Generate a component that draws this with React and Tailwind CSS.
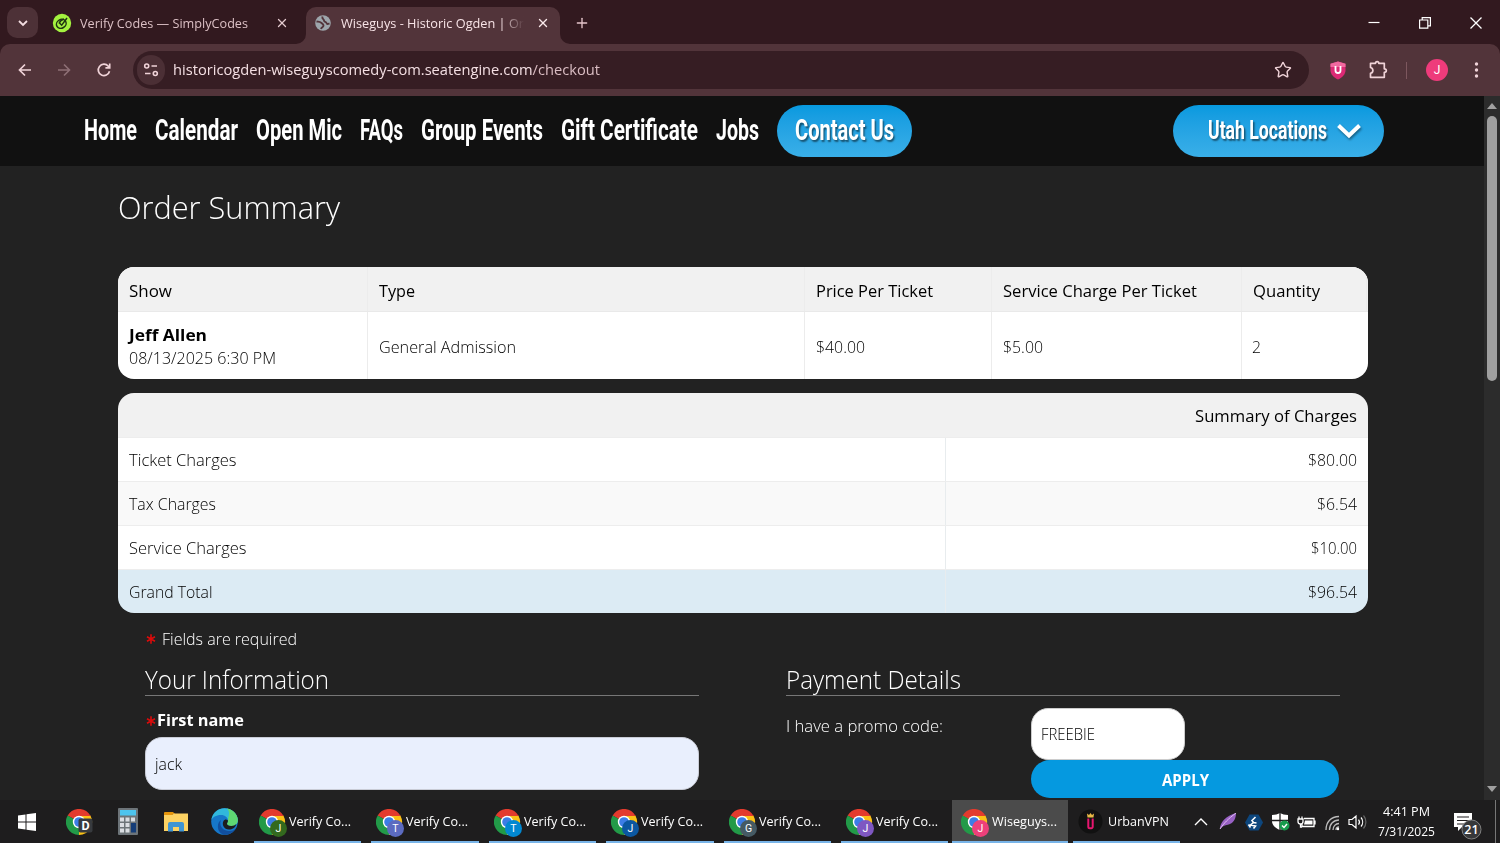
import React, { useLayoutEffect, useRef, useState } from "react";
import { Star, X, Plus } from "lucide-react";

// One line of text, squeezed or stretched to the given width
const Fit = ({ w, className = "", children }) => {
  const ref = useRef(null);
  const [scale, setScale] = useState(1);

  useLayoutEffect(() => {
    if (ref.current.offsetWidth > 0) {
      setScale(w / ref.current.getBoundingClientRect().width);
    }
  }, []);

  return (
    <span className={`block shrink-0 whitespace-nowrap ${className}`} style={{ width: w }}>
      <span ref={ref} className="inline-block origin-left" style={{ transform: `scaleX(${scale})` }}>
        {children}
      </span>
    </span>
  );
};

const TabStrip = () => (
  <div className="flex h-[44px] items-end bg-[#32191f]">
    <div className="mb-[6px] ml-[7px] flex h-[31px] w-[31px] items-center justify-center rounded-[10px] bg-[#4d3137]">
      <svg width="12" height="12" viewBox="0 0 12 12" fill="none" stroke="#f3dde1" strokeWidth="1.8">
        <path d="M2 4l4 4 4-4" />
      </svg>
    </div>
    <div className="flex h-[37px] w-[256px] items-center pb-[6px] pl-[14px]">
      <svg width="20" height="20" viewBox="0 0 20 20">
        <circle cx="10" cy="10" r="9.2" fill="#a4f23f" />
        <ellipse cx="9.300" cy="10.800" rx="5" ry="4.300" fill="none" stroke="#203512" strokeWidth="1.500" transform="rotate(-30 9.300 10.800)" />
        <path d="M7.500 10l2.200 2.200 5.300-7.200M7 10.500c1-2.500 3-4 5-4.500" fill="none" stroke="#203512" strokeWidth="1.500" />
      </svg>
      <Fit w={168} className="ml-[7.500px] pt-px text-[13.5px] text-[#dcc0c5]">Verify Codes — SimplyCodes</Fit>
      <X className="ml-[27px] shrink-0 text-[#e6cbd0]" size={14} strokeWidth={2.2} />
    </div>
    <div className="relative ml-[12px] flex h-[37px] w-[254px] items-center rounded-t-[10px] bg-[#52343a] pb-[6px] pl-[9px]">
      <svg className="absolute bottom-0 -left-[10px]" width="10" height="10" viewBox="0 0 10 10">
        <path d="M10 0v10H0A10 10 0 0 0 10 0z" fill="#52343a" />
      </svg>
      <svg className="absolute -right-[10px] bottom-0" width="10" height="10" viewBox="0 0 10 10">
        <path d="M0 0v10h10A10 10 0 0 1 0 0z" fill="#52343a" />
      </svg>
      <svg width="16" height="16" viewBox="0 0 16 16" className="shrink-0">
        <circle cx="8" cy="8" r="7.8" fill="#9da5ab" />
        <path d="M1.500 6.500c2 .3 3.500 0 4.500 1.200s2.500 1 2.500 2.800-2 1.500-2.500 3.500M7.500 1.500C6.500 4 9 4 9 5.500s2 1 2.500 2.500 1.500 1 3 .5" fill="none" stroke="#52343a" strokeWidth="1.900" />
      </svg>
      <div className="relative ml-[10px]">
        <Fit w={183} className="pt-px text-[13.5px] text-[#f8e4e7]">Wiseguys - Historic Ogden | Or</Fit>
        <div className="absolute top-0 right-0 h-full w-[24px] bg-linear-to-r from-transparent to-[#52343a]" />
      </div>
      <X className="ml-[12px] shrink-0 text-[#fbe9eb]" size={14} strokeWidth={2.4} />
    </div>
    <Plus className="mb-[13px] ml-[14px] text-[#e6c5cb]" size={16} strokeWidth={2} />
    <div className="mb-[15px] ml-auto flex items-center gap-[39px] pr-[18px] text-white">
      <svg width="12" height="12" viewBox="0 0 12 12" stroke="currentColor" fill="none">
        <path d="M0.5 5.5h11" strokeWidth="1.2" />
      </svg>
      <svg width="12" height="12" viewBox="0 0 12 12" stroke="currentColor" fill="none" strokeWidth="1.2">
        <path d="M0.6 3h8.2v8.2H0.6zM3.2 3V0.6h8.2v8.2H9" />
      </svg>
      <svg width="12" height="12" viewBox="0 0 12 12" stroke="currentColor" fill="none" strokeWidth="1.3">
        <path d="M0.5 0.5l11 11M11.5 0.5l-11 11" />
      </svg>
    </div>
  </div>
);

const Toolbar = () => (
  <div className="bg-[#32191f]">
    <div className="flex h-[52px] items-center rounded-t-[10px] bg-[#52343a] text-[#f0d3d8]">
      <svg className="ml-[17px]" width="16" height="16" viewBox="0 0 16 16" fill="none" stroke="currentColor" strokeWidth="1.7">
        <path d="M14 8H2.5M8 2.5L2.5 8 8 13.5" />
      </svg>
      <svg className="ml-[23px] text-[#8f6f76]" width="16" height="16" viewBox="0 0 16 16" fill="none" stroke="currentColor" strokeWidth="1.6">
        <path d="M2 8h11.500M8 2.500L13.500 8 8 13.500" />
      </svg>
      <svg className="ml-[24px]" width="16" height="16" viewBox="0 0 16 16" fill="none" stroke="currentColor" strokeWidth="1.7">
        <path d="M13.500 9.300A5.700 5.700 0 1 1 12.300 4.200L13.500 5.500M13.700 1.500v4.300H9.400" />
      </svg>
      <div className="ml-[21px] flex h-[38px] w-[1176px] items-center rounded-full bg-[#361d23]">
        <div className="ml-[4px] flex h-[30px] w-[28px] items-center justify-center rounded-full bg-[#4b2f35]">
          <svg width="16" height="16" viewBox="0 0 16 16" fill="none" stroke="currentColor" strokeWidth="1.6">
            <circle cx="3.700" cy="4" r="2" />
            <path d="M8.500 4H14M2 11.500h5.500" />
            <circle cx="12.300" cy="11.500" r="2" />
          </svg>
        </div>
        <Fit w={427} className="ml-[8px] pb-px text-[15px] text-[#f4dfe3]">
          historicogden-wiseguyscomedy-com.seatengine.com<span className="text-[#d9bcc2]">/checkout</span>
        </Fit>
        <Star className="mr-[17px] ml-auto" size={18} strokeWidth={1.9} strokeLinejoin="miter" />
      </div>
      <svg className="ml-[20px]" width="18" height="19" viewBox="0 0 18 19">
        <path d="M9 .5l7.500 2.300v6.500c0 4-3 7.200-7.500 9.200-4.500-2-7.500-5.200-7.500-9.200V2.800z" fill="#dc2a75" />
        <path d="M9 .5l7.500 2.300V6h-15V2.800z" fill="#f06aa0" />
        <path d="M6.500 5v4.500a2.500 2.500 0 0 0 5 0V5" fill="none" stroke="#fff" strokeWidth="1.800" />
      </svg>
      <svg className="ml-[21px]" width="20" height="20" viewBox="0 0 20 20" fill="none" stroke="currentColor" strokeWidth="1.7" strokeLinejoin="round">
        <path d="M2.500 3.300h5C7.500 1 10.800 1 10.800 3.300h5.500v5.500c2.700 0 2.700 3.500 0 3.500v5H2.500v-4c3.200-.8 3.200-5 0-5.800z" />
      </svg>
      <div className="ml-[18px] h-[17px] w-px bg-[#7d575e]" />
      <div className="ml-[19px] flex h-[22px] w-[22px] items-center justify-center rounded-full bg-[#ee3b7b] font-['Roboto',sans-serif] text-[12px] text-white">J</div>
      <svg className="ml-[26px]" width="5" height="18" viewBox="0 0 5 18" fill="currentColor">
        <circle cx="2.500" cy="3" r="1.700" />
        <circle cx="2.500" cy="9" r="1.700" />
        <circle cx="2.500" cy="15" r="1.700" />
      </svg>
    </div>
  </div>
);

const links = [
  { label: "Home", w: 53 },
  { label: "Calendar", w: 83 },
  { label: "Open Mic", w: 86 },
  { label: "FAQs", w: 43 },
  { label: "Group Events", w: 122 },
  { label: "Gift Certificate", w: 137 },
  { label: "Jobs", w: 43 },
];

const SiteNav = () => (
  <nav className="flex h-[70px] items-center bg-[#111] pl-[84px] font-['Roboto',sans-serif] text-[29px] leading-[52px] font-bold text-white">
    <div className="flex gap-[18px] pb-[2px]">
      {links.map((link) => (
        <Fit key={link.label} w={link.w}>{link.label}</Fit>
      ))}
    </div>
    <div className="ml-[18px] h-[52px] w-[135px] rounded-full bg-linear-to-b from-[#0699df] to-[#39afe8] pl-[18px] leading-[50px]">
      <Fit w={99} className="[text-shadow:2px_2px_2px_rgba(0,0,0,0.5)]">Contact Us</Fit>
    </div>
    <div className="ml-[261px] flex h-[52px] w-[211px] items-center rounded-full bg-linear-to-b from-[#0699df] to-[#39afe8] pl-[35px]">
      <Fit w={119} className="text-[25px] [text-shadow:2px_2px_2px_rgba(0,0,0,0.5)]">Utah Locations</Fit>
      <svg className="ml-[9px] drop-shadow-[1px_2px_1px_rgba(0,0,0,0.4)]" width="26" height="18" viewBox="0 0 26 18" fill="none" stroke="#fff" strokeWidth="4">
        <path d="M2.500 3.500L13 13.500 23.500 3.500" />
      </svg>
    </div>
  </nav>
);

const orderColumns = [
  { label: "Show", w: 43, cell: "w-[250px]" },
  { label: "Type", w: 36, cell: "w-[437px]" },
  { label: "Price Per Ticket", w: 117, cell: "w-[187px]" },
  { label: "Service Charge Per Ticket", w: 194, cell: "w-[250px]" },
  { label: "Quantity", w: 67, cell: "w-[125px]" },
];

const OrderTable = () => (
  <table className="mt-[37px] block h-[112px] w-[1249.500px] overflow-hidden rounded-[16px] bg-white text-left text-black">
    <tbody className="block">
      <tr className="flex h-[45px] items-stretch border-b border-[#e9e9e9] bg-[#f1f1f1]">
        {orderColumns.map((col) => (
          <th key={col.label} className={`flex shrink-0 items-center border-r border-[#ececec] pt-[5px] pl-[10.500px] font-normal ${col.cell}`}>
            <Fit w={col.w}>{col.label}</Fit>
          </th>
        ))}
      </tr>
      <tr className="flex h-[67px] items-stretch font-light">
        <td className="w-[250px] shrink-0 border-r border-[#ececec] pt-[11px] pl-[10.500px] leading-[23px]">
          <Fit w={78} className="font-bold">Jeff Allen</Fit>
          <Fit w={147}>08/13/2025 6:30 PM</Fit>
        </td>
        <td className="flex w-[437px] shrink-0 items-center border-r border-[#ececec] pt-[3px] pl-[10.500px]">
          <Fit w={137}>General Admission</Fit>
        </td>
        <td className="flex w-[187px] shrink-0 items-center border-r border-[#ececec] pt-[3px] pl-[10.500px]">
          <Fit w={49}>$40.00</Fit>
        </td>
        <td className="flex w-[250px] shrink-0 items-center border-r border-[#ececec] pt-[3px] pl-[11px]">
          <Fit w={40}>$5.00</Fit>
        </td>
        <td className="flex items-center pt-[3px] pl-[10px]">
          <Fit w={9}>2</Fit>
        </td>
      </tr>
    </tbody>
  </table>
);

const charges = [
  { label: "Ticket Charges", w: 107.500, amount: "$80.00", aw: 49, row: "bg-white" },
  { label: "Tax Charges", w: 87, amount: "$6.54", aw: 40, row: "bg-[#f9f9f9]" },
  { label: "Service Charges", w: 117.500, amount: "$10.00", aw: 46, row: "bg-white" },
  { label: "Grand Total", w: 83.500, amount: "$96.54", aw: 49, row: "bg-[#dcebf4]" },
];

const ChargesTable = () => (
  <table className="mt-[14px] block w-[1249.500px] overflow-hidden rounded-[16px] text-black">
    <tbody className="block">
      <tr className="flex h-[44px] items-center justify-end bg-[#f1f1f1] pt-[3px] pr-[11px]">
        <th className="font-normal">
          <Fit w={162}>Summary of Charges</Fit>
        </th>
      </tr>
      {charges.map((charge) => (
        <tr key={charge.label} className={`flex h-[44px] border-t border-[#ededed] font-light ${charge.row}`}>
          <td className="flex w-[828px] items-center border-r border-[#e8ecee] pt-[2px] pl-[10.500px]">
            <Fit w={charge.w}>{charge.label}</Fit>
          </td>
          <td className="flex flex-1 items-center justify-end pt-[2px] pr-[11px]">
            <Fit w={charge.aw}>{charge.amount}</Fit>
          </td>
        </tr>
      ))}
    </tbody>
  </table>
);

const Asterisk = () => (
  <svg width="10" height="10" viewBox="0 0 10 10" stroke="#dc0b0b" strokeWidth="1.6" className="shrink-0">
    <path d="M5 .3v9.400M1 2.700l8 4.600M9 2.700l-8 4.600" />
  </svg>
);

const Checkout = () => (
  <main className="flex-1 overflow-hidden bg-[#222] pl-[118px] text-[16.5px] text-white">
    <h1 className="pt-[18px] text-[32px] leading-[46px] font-light">
      <Fit w={222}>Order Summary</Fit>
    </h1>
    <OrderTable />
    <ChargesTable />
    <div className="mt-[14px] ml-[28px] flex h-[24px] items-center gap-[6px] text-[16px] font-light">
      <Asterisk />
      <Fit w={135}>Fields are required</Fit>
    </div>
    <div className="ml-[27px] flex gap-[87px]">
      <section className="w-[554px]">
        <h2 className="mt-[12px] h-[33px] border-b border-[#777] text-[25px] leading-[32px] font-light">
          <Fit w={184}>Your Information</Fit>
        </h2>
        <label className="mt-[12px] flex h-[25px] items-center gap-[1px] pl-px text-[15.5px] font-bold">
          <Asterisk />
          <Fit w={87}>First name</Fit>
        </label>
        <div className="mt-[4px] flex h-[53px] items-center rounded-[17px] border border-[#c9ccd6] bg-[#e9effd] pt-px pl-[9px] font-light text-black">
          <Fit w={27} className="text-[16px]">jack</Fit>
        </div>
      </section>
      <section className="w-[554px]">
        <h2 className="mt-[12px] h-[33px] border-b border-[#777] text-[25px] leading-[32px] font-light">
          <Fit w={175}>Payment Details</Fit>
        </h2>
        <div className="mt-[12px] flex">
          <Fit w={157} className="mt-[6px] text-[16px] font-light">I have a promo code:</Fit>
          <div className="ml-[87.500px] w-[308.500px]">
            <div className="flex h-[52px] w-[154px] items-center rounded-[17px] border border-[#ccc] bg-white pl-[9px] font-light text-black">
              <Fit w={54} className="text-[16px]">FREEBIE</Fit>
            </div>
            <button className="flex h-[38px] w-full items-center justify-center rounded-full bg-[#0599e0] pt-[3px] pl-px text-[15.5px] font-bold">
              <Fit w={47}>APPLY</Fit>
            </button>
          </div>
        </div>
      </section>
    </div>
  </main>
);

const ScrollBar = () => (
  <div className="flex w-[16px] shrink-0 flex-col items-center bg-[#2c2c2c] pt-[7px] pb-[8px]">
    <svg width="10" height="6" viewBox="0 0 10 6" fill="#a0a0a0"><path d="M0 6l5-6 5 6z" /></svg>
    <div className="mt-[7px] h-[265px] w-[10px] rounded-full bg-[#9f9f9f]" />
    <svg className="mt-auto" width="10" height="6" viewBox="0 0 10 6" fill="#a0a0a0"><path d="M0 0l5 6 5-6z" /></svg>
  </div>
);

const ChromeIcon = ({ letter, color, square }) => (
  <svg width="29" height="29" viewBox="0 0 29 29" className="shrink-0 font-['Roboto',sans-serif]">
    <path d="M13 13L1.700 6.500A13 13 0 0 1 24.300 6.500z" fill="#e33b2e" />
    <path d="M13 13L24.300 6.500A13 13 0 0 1 13 26z" fill="#fbc116" />
    <path d="M13 13v13A13 13 0 0 1 1.700 6.500z" fill="#229a48" />
    <path d="M13 7.100h11.600l-5 9z" fill="#fbc116" />
    <path d="M1.700 6.500L13 1l11.300 5.500.3.600H13z" fill="#e33b2e" />
    <circle cx="13" cy="13" r="6.200" fill="#fff" />
    <circle cx="13" cy="13" r="4.800" fill="#3c7de6" />
    {square ? (
      <rect x="12.500" y="9.500" width="14" height="14" rx="2" fill="#373a3e" />
    ) : (
      <circle cx="19.500" cy="19.500" r="8.500" fill={color} />
    )}
    <text
      x="19.500"
      y={square ? 21 : 23.200}
      fill="#fff"
      fontSize={square ? 12.5 : 10.5}
      fontWeight={square ? 700 : 400}
      textAnchor="middle"
    >
      {letter}
    </text>
  </svg>
);

const windows = [
  { letter: "J", color: "#33691e", title: "Verify Co..." },
  { letter: "T", color: "#5c6bc0", title: "Verify Co..." },
  { letter: "T", color: "#0288d1", title: "Verify Co..." },
  { letter: "J", color: "#0b57a0", title: "Verify Co..." },
  { letter: "G", color: "#455a64", title: "Verify Co..." },
  { letter: "J", color: "#7e57c2", title: "Verify Co..." },
];

const Taskbar = () => (
  <div className="flex h-[43px] shrink-0 items-stretch bg-[#1e1d1e] text-[13.5px] text-white">
    <div className="flex w-[254px] shrink-0 items-center">
      <svg className="ml-[18px]" width="18" height="18" viewBox="0 0 18 18" fill="#fff">
        <path d="M0 2.500l7.500-1v7H0zM8.500 1.300L18 0v8.500H8.500zM0 9.500h7.500v7L0 15.500zM8.500 9.500H18V18l-9.500-1.300z" />
      </svg>
      <div className="mt-[3px] ml-[30px] flex">
        <ChromeIcon letter="D" square />
      </div>
      <svg className="ml-[23px]" width="20" height="27" viewBox="0 0 20 27">
        <rect width="20" height="27" rx="1" fill="#6d7479" />
        <rect x="2" y="2" width="16" height="5.500" fill="#4dc4ee" />
        <path d="M2 9.500h4v4H2zM7.500 9.500h4v4h-4zM13 9.500h4v4h-4zM2 15h4v4H2zM7.500 15h4v4h-4zM2 20.500h4v4H2zM7.500 20.500h4v4h-4z" fill="#dadde2" />
        <path d="M13 15h5v9.500h-5z" fill="#153d78" />
      </svg>
      <svg className="ml-[26px]" width="24" height="20" viewBox="0 0 24 20">
        <path d="M0 1a1 1 0 0 1 1-1h8l2 2h-2L8 4H0z" fill="#e5940b" />
        <path d="M0 3h8l2-1.500h14V19H0z" fill="#fdd263" />
        <path d="M4 19.500v-7.500a2 2 0 0 1 2-2h12a2 2 0 0 1 2 2v7.500h-5v-4.500H9v4.500z" fill="#4095d3" />
      </svg>
      <svg className="ml-[23px]" width="27" height="27" viewBox="0 0 27 27">
        <circle cx="13.500" cy="13.500" r="13.300" fill="#1677c9" />
        <path d="M.3 12C2 4 7.500.2 13.500.2 21 .2 26.800 6 26.800 12c0 4-3 6-6.500 6-3 0-4.300-1-4.300-2.200 0-1 1-1.600 1-3.300 0-3-3-5.500-7-5.500-5 0-8.500 2.500-9.700 5z" fill="#31b8dc" />
        <path d="M16 .5C22.500 1.500 26.800 7 26.800 12c0 4-3 6-6.500 6-3 0-4.300-1-4.300-2.200 0-1 1-1.600 1-3.300C17 8 20 5 16 .5z" fill="#5fd873" />
        <path d="M10 12c-2.500 6 2 11 8 11 3 0 5-1 6.500-2A13.300 13.300 0 0 1 13 26.800C6 25 5 15.500 10 12z" fill="#114f9f" />
        <path d="M17 12.500c0 1.700-1 2.300-1 3.300 0 1.200 1.300 2.200 4.300 2.200 2 0 4-.7 5-2-1 4-4 5.500-7.300 5.500-5 0-7.500-5-5.500-8.500 1-1.700 3-2 4.500-.5z" fill="#1d1d1e" />
      </svg>
    </div>
    <div className="flex shrink-0 gap-[10px]">
      {windows.map((win, index) => (
        <div key={index} className="flex w-[107.400px] items-center border-b-2 border-[#78b4e8] pl-[5px]">
          <div className="mt-[5px]"><ChromeIcon letter={win.letter} color={win.color} /></div>
          <Fit w={62} className="ml-px pt-[2px]">{win.title}</Fit>
        </div>
      ))}
    </div>
    <div className="ml-[4px] flex w-[116px] shrink-0 items-center border-b-2 border-[#78b4e8] bg-[#4b4b4b] pl-[9px]">
      <div className="mt-[5px]"><ChromeIcon letter="J" color="#ec407a" /></div>
      <Fit w={65} className="ml-[2px] pt-[2px]">Wiseguys...</Fit>
    </div>
    <div className="ml-[5px] flex w-[107px] shrink-0 items-center border-b-2 border-[#78b4e8] pl-[5px]">
      <svg className="mt-[2px]" width="25" height="25" viewBox="0 0 25 25">
        <circle cx="12.500" cy="12.500" r="12" fill="#111" />
        <path d="M9.500 8.500L9 4.500l2 1.500 1.500-2 1.500 2 2-1.500-.5 4z" fill="#e8b746" />
        <path d="M10.300 9.500v8.300a1.500 1.500 0 0 0 1.500 1.500h1.400a1.500 1.500 0 0 0 1.500-1.500V9.500" fill="none" stroke="#e5166e" strokeWidth="2" />
      </svg>
      <Fit w={61} className="ml-[5px] pt-[2px]">UrbanVPN</Fit>
    </div>
    <div className="ml-[14px] flex items-center">
      <svg width="14" height="8" viewBox="0 0 14 8" fill="none" stroke="#fff" strokeWidth="1.400"><path d="M1 7l6-6 6 6" /></svg>
      <svg className="ml-[11px]" width="18" height="17" viewBox="0 0 18 17">
        <path d="M1 16C1 9 7 3 17 0c0 5-2 9-6 11-3 1.500-6 1-8 3z" fill="#9861c4" />
        <path d="M1 16C5 10 9 6 17 0" stroke="#e0bdf0" fill="none" />
      </svg>
      <svg className="mt-[2px] ml-[8px]" width="18" height="17" viewBox="0 0 18 17">
        <path d="M4.500.5h9L18 8.500l-4.500 8h-9L0 8.500z" fill="#0d467d" />
        <path d="M10.500 3L7 6.500l1.500 2 3 .5M8.500 8.500L5.500 11l5 1-2 2.500M3.500 10.500l2 3" stroke="#fff" strokeWidth="1.600" fill="none" />
      </svg>
      <svg className="mt-px ml-[9px]" width="18" height="18" viewBox="0 0 18 18">
        <path d="M8 0c2 1.300 5 2 8 2v6c0 4-3 7-8 9-5-2-8-5-8-9V2c3 0 6-.7 8-2z" fill="#fff" />
        <path d="M8 0v17M0 7.500h16" stroke="#1e1d1e" strokeWidth="1.300" />
        <circle cx="12.500" cy="12.500" r="5" fill="#169b4c" />
        <path d="M10 12.500l2 2 3-3.500" stroke="#fff" strokeWidth="1.400" fill="none" />
      </svg>
      <svg className="ml-[7px]" width="19" height="14" viewBox="0 0 19 14" fill="none" stroke="#fff" strokeWidth="1.300">
        <path d="M7 3.500h10v8H5V8M18 5.500v4M1 4h5v2.500a2 2 0 0 1-5 0zM2 4V1.500M5 4V1.500M3.500 8.500V12H5" />
        <path d="M8 5.500h7.500v4H7z" fill="#fff" stroke="none" />
      </svg>
      <svg className="mt-[2px] ml-[9px]" width="15" height="16" viewBox="0 0 15 16" fill="none" stroke="#bbb" strokeWidth="1.300">
        <path d="M1 15C1 7 6 1.500 14 1.500M4.500 15c0-6 4-10 9.500-10M8 15c0-3.500 2.500-6.500 6-6.500M11 15c0-1.800 1.300-3 3-3" />
        <circle cx="13" cy="14" r="1.200" fill="#fff" stroke="none" />
      </svg>
      <svg className="ml-[8px]" width="19" height="16" viewBox="0 0 19 16" fill="none" stroke="#fff" strokeWidth="1.200">
        <path d="M1 5.500h3L8 2v12l-4-3.500H1zM10.500 5.500a4 4 0 0 1 0 5M13 3.500a7 7 0 0 1 0 9" />
        <path d="M15.500 1.500a10 10 0 0 1 0 13" stroke="#666" />
      </svg>
      <div className="ml-[10px] flex w-[58px] flex-col items-center pt-px text-[12.500px] leading-[20px]">
        <Fit w={47}>4:41 PM</Fit>
        <Fit w={57}>7/31/2025</Fit>
      </div>
      <svg className="mt-[8px] ml-[19px] font-['Open_Sans',sans-serif]" width="28" height="28" viewBox="0 0 28 28">
        <path d="M0 1h18v14H8l-4 4v-4H0z" fill="#fff" />
        <path d="M3 5h12M3 8.500h12M3 12h8" stroke="#1e1d1e" strokeWidth="1.200" />
        <circle cx="17.500" cy="17.500" r="9.500" fill="#37383a" stroke="#808080" />
        <text x="17.500" y="22" fill="#fff" fontSize="12.5" fontWeight="600" textAnchor="middle">21</text>
      </svg>
    </div>
    <div className="mr-[4px] ml-auto w-px bg-[#777]" />
  </div>
);

const App = () => {
  return (
    <div className="flex h-[843px] w-[1500px] flex-col overflow-hidden bg-[#222] font-['Open_Sans','Noto_Sans',sans-serif]">
      <TabStrip />
      <Toolbar />
      <div className="flex h-[704px] shrink-0">
        <div className="flex w-[1484px] flex-col">
          <SiteNav />
          <Checkout />
        </div>
        <ScrollBar />
      </div>
      <Taskbar />
    </div>
  );
};

export default App;
